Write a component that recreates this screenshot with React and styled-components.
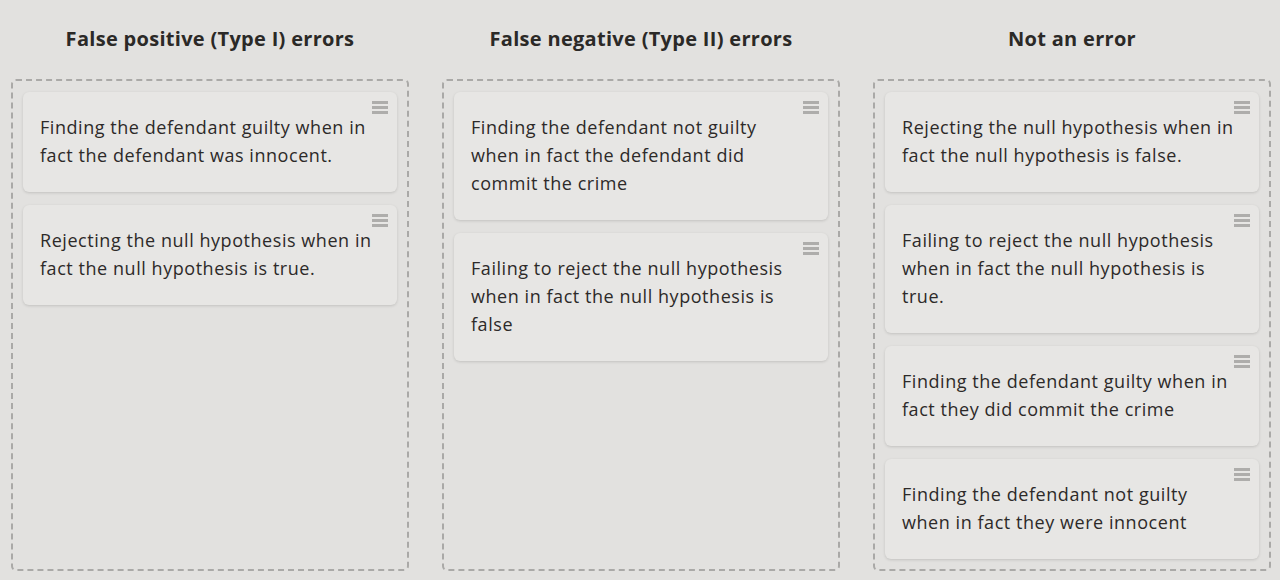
import React from "react";
import styled, { createGlobalStyle } from "styled-components";

const Global = createGlobalStyle`
  html, body { margin: 0; padding: 0; background: #e2e1df; }
  body { font-family: "Open Sans", "Noto Sans", sans-serif; color: #2d2a29; }
`;

const Board = styled.div`
  display: grid;
  grid-template-columns: repeat(3, 398px);
  column-gap: 33px;
  padding: 0 10px 0 11px;
  height: 580px;
  box-sizing: border-box;
`;

const Column = styled.div`
  display: flex;
  flex-direction: column;
`;

const Heading = styled.h2`
  margin: 0;
  height: 79px;
  display: flex;
  align-items: center;
  justify-content: center;
  padding-bottom: 2px;
  box-sizing: border-box;
  font-size: 20px;
  font-weight: 700;
  letter-spacing: 0.3px;
  color: #2b2927;
`;

const Zone = styled.div`
  border: 2px dashed #aaa9a7;
  border-radius: 5px;
  height: 492px;
  box-sizing: border-box;
  padding: 11px 10px;
  display: flex;
  flex-direction: column;
  gap: 13px;
`;

const Card = styled.div`
  position: relative;
  background: #e7e6e4;
  border-radius: 6px;
  box-shadow: 0 1px 3px rgba(0, 0, 0, 0.14);
  padding: 21px 22px 23px 17px;
  font-size: 18px;
  letter-spacing: 0.55px;
  line-height: 28px;
  color: #2d2a29;
`;

const Handle = styled.span`
  position: absolute;
  top: 9px;
  right: 9px;
  width: 16px;
  display: flex;
  flex-direction: column;
  gap: 2px;
  & > i {
    display: block;
    height: 3px;
    background: #aeadab;
  }
`;

const columns = [
  {
    title: "False positive (Type I) errors",
    cards: [
      "Finding the defendant guilty when in fact the defendant was innocent.",
      "Rejecting the null hypothesis when in fact the null hypothesis is true.",
    ],
  },
  {
    title: "False negative (Type II) errors",
    cards: [
      "Finding the defendant not guilty when in fact the defendant did commit the crime",
      "Failing to reject the null hypothesis when in fact the null hypothesis is false",
    ],
  },
  {
    title: "Not an error",
    cards: [
      "Rejecting the null hypothesis when in fact the null hypothesis is false.",
      "Failing to reject the null hypothesis when in fact the null hypothesis is true.",
      "Finding the defendant guilty when in fact they did commit the crime",
      "Finding the defendant not guilty when in fact they were innocent",
    ],
  },
];

export default function App() {
  return (
    <>
      <Global />
      <Board>
        {columns.map((col) => (
          <Column key={col.title}>
            <Heading>{col.title}</Heading>
            <Zone>
              {col.cards.map((c) => (
                <Card key={c}>
                  <Handle>
                    <i />
                    <i />
                    <i />
                  </Handle>
                  {c}
                </Card>
              ))}
            </Zone>
          </Column>
        ))}
      </Board>
    </>
  );
}
